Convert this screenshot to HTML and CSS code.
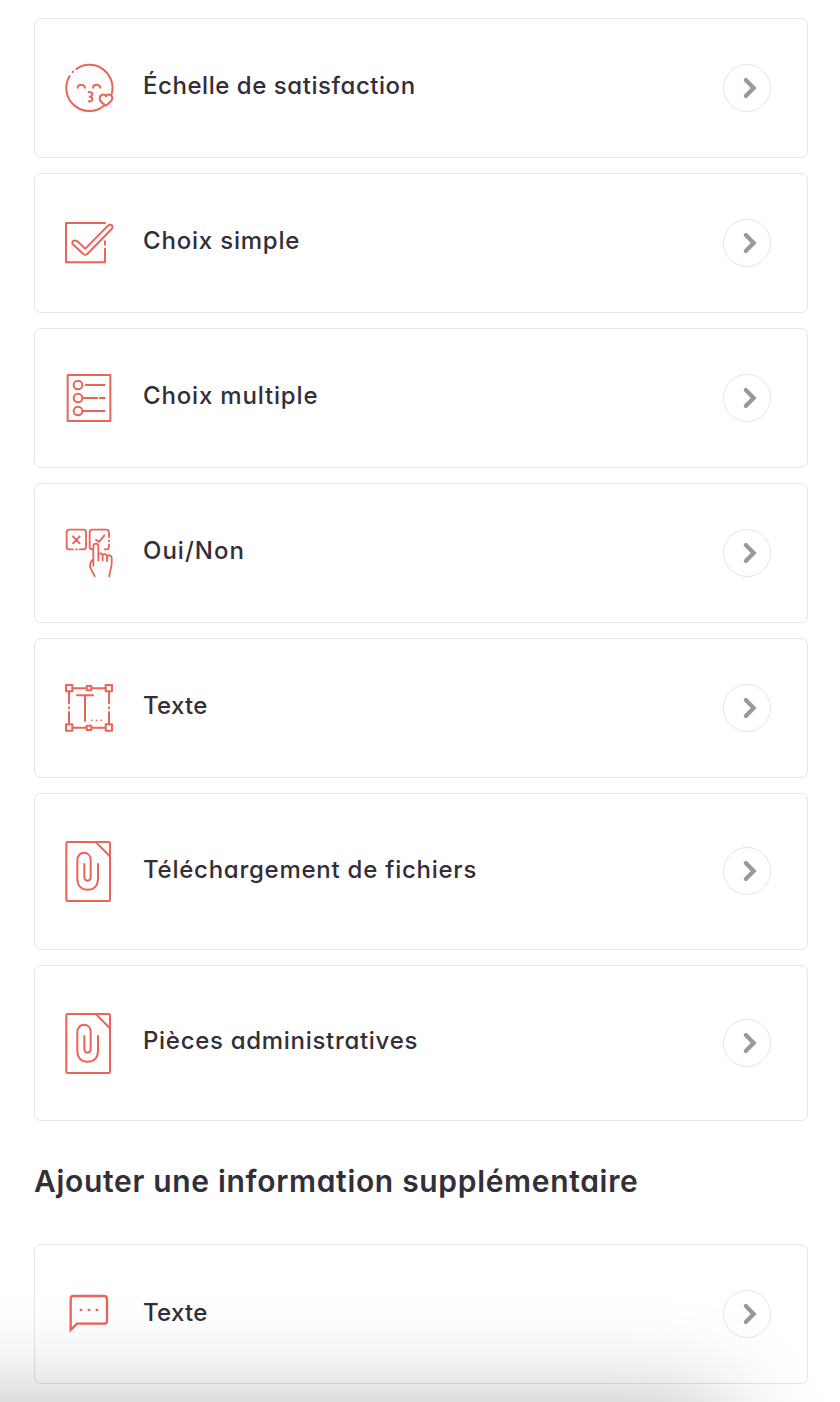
FILE: index.html
```html
<!DOCTYPE html>
<html lang="fr">
<head>
<meta charset="utf-8">
<title>Ajouter une question</title>
<link rel="stylesheet" href="styles.css">
</head>
<body>
<svg class="defs" width="0" height="0">
  <symbol id="chevron" viewBox="0 0 48 48"><path d="M22.800 15.900l7.900 8-7.900 8"/></symbol>
  <symbol id="clip" viewBox="0 0 210 210">
    <rect x="37" y="18" width="131" height="177" rx="4"/>
    <path d="M126 19L167 60M91 84V124a9.500 10 0 0 0 19 0V72C110 58 101 50 90 50S70 59 70 73V128C70 149 82 161 101 161S132 149 132 128V84"/>
  </symbol>
</svg>
<main class="page">
  <section class="list">
    <div class="card">
      <svg class="icon icon-up" viewBox="0 0 210 210">
        <path d="M47 66A69 69 0 0 0 150 155M173 120A69 69 0 0 0 67 45M56 54l1-1M71 101c1-12 20-12 22 0M117 101c1-12 20-12 22 0M104 114c14-2 14 14 3 14c12 0 11 16-3 14"/>
        <path d="M156 127c4-9 20-6 19 6c-1 9-8 12-19 22c-11-7-19-12-19-22c0-12 15-15 19-6z"/>
      </svg>
      <span class="label label-scale">Échelle de satisfaction</span>
      <span class="go"><svg><use href="#chevron"/></svg></span>
    </div>
    <div class="card">
      <svg class="icon" viewBox="0 0 210 210">
        <path d="M153 45H36V163H153V122M153 100V110"/>
        <path d="M58 110L88 138Q94 143 100 138L173 63C180 54 170 46 162 53L94 122L70 100C60 93 50 102 58 110z"/>
      </svg>
      <span class="label label-single">Choix simple</span>
      <span class="go"><svg><use href="#chevron"/></svg></span>
    </div>
    <div class="card">
      <svg class="icon" viewBox="0 0 210 210">
        <path d="M41 36H169V174H41zM95 66H152M87 105H130M138 105H152M87 144H152"/>
        <circle cx="72" cy="66" r="13"/><circle cx="72" cy="105" r="13"/><circle cx="72" cy="144" r="13"/>
      </svg>
      <span class="label label-multi">Choix multiple</span>
      <span class="go"><svg><use href="#chevron"/></svg></span>
    </div>
    <div class="card">
      <svg class="icon icon-fine" viewBox="0 0 210 210">
        <path d="M57 94H46Q38 94 38 86V43Q38 35 46 35H89Q96 35 96 43V86Q96 94 88 94H77M66 94h3M57 55L77 76M77 55L57 76"/>
        <path d="M115 94Q107 94 107 86V43Q107 35 115 35H157Q165 35 165 43V57M165 67v3M165 79V86Q165 94 157 94H152M126 65L135 72L151 52"/>
        <path d="M122 175C118 163 109 156 108 145C107 136 111 130 118 123V86C118 74 133 74 133 86V127M133 112C133 104 146 104 146 114V127M146 114C147 105 159 107 159 117V129M159 117C164 108 173 112 173 120V136C173 151 167 157 166 175M118 123V143"/>
      </svg>
      <span class="label label-yesno">Oui/Non</span>
      <span class="go"><svg><use href="#chevron"/></svg></span>
    </div>
    <div class="card">
      <svg class="icon" viewBox="0 0 210 210">
        <path d="M56 46H97M113 46H154M56 164H97M113 164H154M45 56V91M45 103v3M45 117V153M165 56V91M165 103v3M165 117V153M69 67H117M93 67V144"/>
        <path d="M36 36H55V55H36zM155 36H174V55H155zM36 154H55V173H36zM155 154H174V173H155zM98 39H112V52H98zM98 158H112V171H98z"/>
        <path class="small-dots" d="M113 142h1M127 142h1M141 142h1"/>
      </svg>
      <span class="label label-text">Texte</span>
      <span class="go"><svg><use href="#chevron"/></svg></span>
    </div>
    <div class="card card-file">
      <svg class="icon"><use href="#clip"/></svg>
      <span class="label label-upload">Téléchargement de fichiers</span>
      <span class="go"><svg><use href="#chevron"/></svg></span>
    </div>
    <div class="card card-admin">
      <svg class="icon"><use href="#clip"/></svg>
      <span class="label label-admin">Pièces administratives</span>
      <span class="go"><svg><use href="#chevron"/></svg></span>
    </div>
  </section>
  <h2 class="heading">Ajouter une information supplémentaire</h2>
  <section class="list">
    <div class="card">
      <svg class="icon icon-bubble" viewBox="0 0 210 210">
        <path d="M50 150V57Q50 48 58 48H150Q159 48 159 57V122Q159 131 150 131H69z"/>
        <path d="M80 90h2M104 90h2M128 90h2"/>
      </svg>
      <span class="label label-text label-low">Texte</span>
      <span class="go"><svg><use href="#chevron"/></svg></span>
    </div>
  </section>
</main>
<div class="fade"><div class="fade-shadow"></div></div>
</body>
</html>
```
FILE: styles.css
```css
* { box-sizing: border-box; }
body {
  position: relative;
  height: 1402px;
  margin: 0;
  overflow: hidden;
  background: #fff;
  color: #332e38;
  font-family: Inter, "Open Sans", sans-serif;
  font-feature-settings: "cv11";
}
.defs { position: absolute; }
.page { padding: 18px 32px 0 34px; }
.list { display: flex; flex-direction: column; gap: 15px; }
.card {
  display: flex;
  align-items: center;
  height: 140px;
  padding: 0 36px 0 19px;
  border: 1px solid #e5e5e5;
  border-radius: 7px;
}
.card-file { height: 157px; padding-bottom: 1px; }
.card-admin { height: 156px; }
.icon {
  flex: none;
  width: 70px;
  height: 70px;
  fill: none;
  stroke: #eb6459;
  stroke-width: 6;
  stroke-linecap: round;
  stroke-linejoin: round;
}
.icon-up { margin-top: 2px; }
.icon-fine { stroke-width: 5.5; }
.small-dots { stroke-width: 5; }
.icon-bubble { margin-top: 2px; stroke-width: 7; stroke-linejoin: miter; }
.label {
  flex: 1;
  margin-left: 19px;
  padding-bottom: 5px;
  font-size: 24px;
  font-weight: 500;
  line-height: 36px;
  white-space: nowrap;
}
.label-scale { letter-spacing: 0.55px; }
.label-single { letter-spacing: 0.8px; }
.label-multi { letter-spacing: 0.83px; }
.label-yesno { letter-spacing: 1px; }
.label-text { letter-spacing: 0.3px; }
.label-upload { padding-bottom: 3px; letter-spacing: 0.75px; }
.label-admin { letter-spacing: 0.7px; }
.label-low { padding-bottom: 3px; }
.go {
  flex: none;
  width: 48px;
  height: 48px;
  border: 1px solid #e5e5e5;
  border-radius: 50%;
}
.go svg {
  display: block;
  width: 48px;
  height: 48px;
  margin: -1px;
  fill: none;
  stroke: #999;
  stroke-width: 4.2;
  stroke-linecap: round;
  stroke-linejoin: miter;
}
.heading {
  height: 123px;
  margin: 0;
  font-size: 30px;
  font-weight: 600;
  letter-spacing: 0.68px;
  line-height: 120px;
  white-space: nowrap;
}
.fade {
  position: absolute;
  inset: 0;
  overflow: hidden;
  pointer-events: none;
}
.fade-shadow {
  position: absolute;
  top: 1412px;
  left: -200px;
  width: 925px;
  height: 400px;
  box-shadow: 0 0 100px rgba(0, 0, 0, 0.32);
}
```
